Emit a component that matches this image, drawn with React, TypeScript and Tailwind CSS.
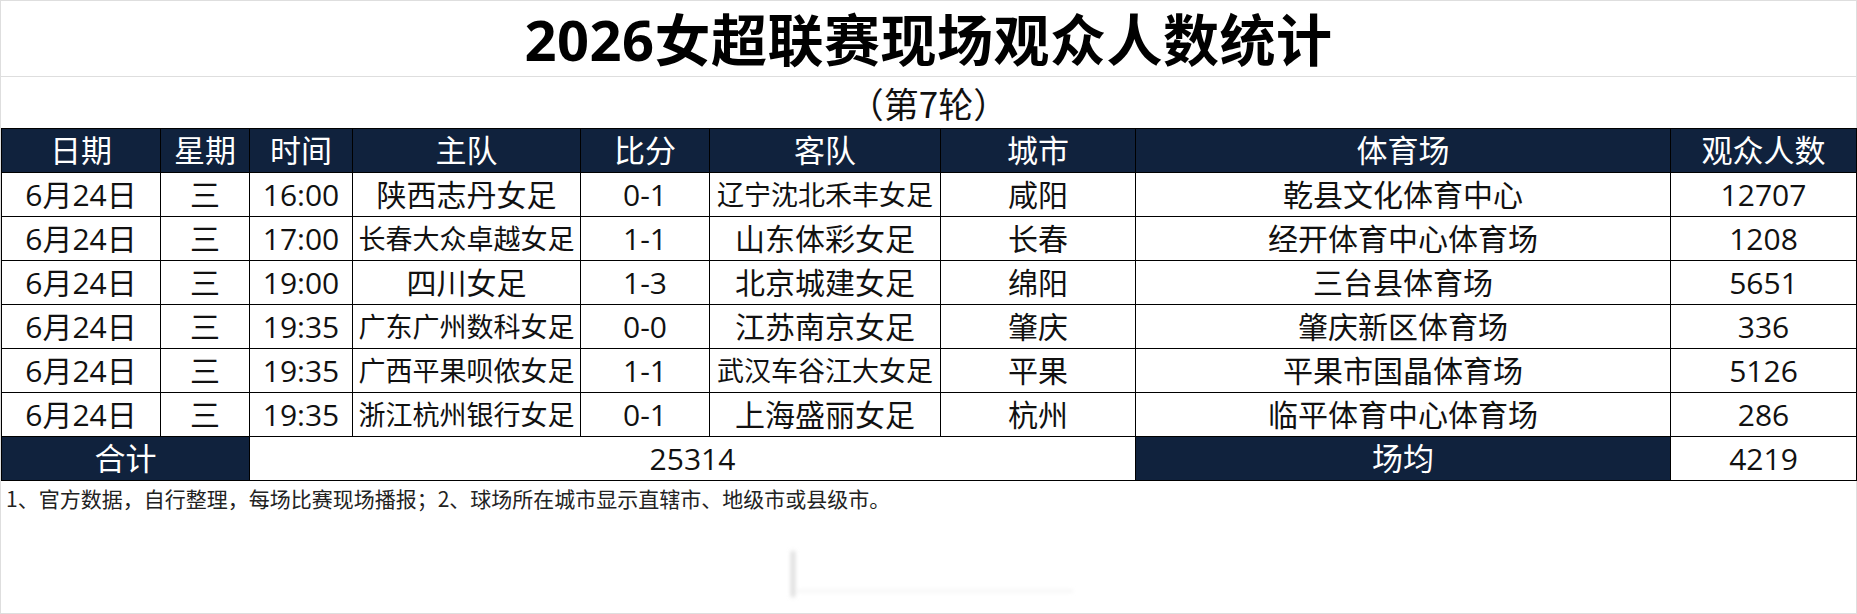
const font = '"Open Sans", "Noto Sans CJK SC", sans-serif'
const cjk = '"Noto Sans CJK SC", "Noto Sans", sans-serif'

type Match = {
  date: string
  day: string
  time: string
  home: string
  score: string
  away: string
  city: string
  venue: string
  crowd: string
}

const matches: Match[] = [
  { date: '6月24日', day: '三', time: '16:00', home: '陕西志丹女足', score: '0-1', away: '辽宁沈北禾丰女足', city: '咸阳', venue: '乾县文化体育中心', crowd: '12707' },
  { date: '6月24日', day: '三', time: '17:00', home: '长春大众卓越女足', score: '1-1', away: '山东体彩女足', city: '长春', venue: '经开体育中心体育场', crowd: '1208' },
  { date: '6月24日', day: '三', time: '19:00', home: '四川女足', score: '1-3', away: '北京城建女足', city: '绵阳', venue: '三台县体育场', crowd: '5651' },
  { date: '6月24日', day: '三', time: '19:35', home: '广东广州数科女足', score: '0-0', away: '江苏南京女足', city: '肇庆', venue: '肇庆新区体育场', crowd: '336' },
  { date: '6月24日', day: '三', time: '19:35', home: '广西平果呗侬女足', score: '1-1', away: '武汉车谷江大女足', city: '平果', venue: '平果市国晶体育场', crowd: '5126' },
  { date: '6月24日', day: '三', time: '19:35', home: '浙江杭州银行女足', score: '0-1', away: '上海盛丽女足', city: '杭州', venue: '临平体育中心体育场', crowd: '286' },
]

const headers = ['日期', '星期', '时间', '主队', '比分', '客队', '城市', '体育场', '观众人数']
const colW = ['w-[159px]', 'w-[89px]', 'w-[103px]', 'w-[228px]', 'w-[129px]', 'w-[231px]', 'w-[195px]', 'w-[535px]', 'w-[186px]']

// long team names get squeezed like a spreadsheet "shrink to fit"
const teamSize = (name: string) => (name.length > 6 ? 'text-[27px]' : 'text-[30px]')

const cell = 'border border-black p-0 align-middle whitespace-nowrap'

export default function App() {
  return (
    <div
      className="relative box-border w-[1857px] h-[614px] bg-white border border-[#dedede] flex flex-col text-[#111]"
      style={{ fontFamily: font }}
    >
      <div className="h-[76px] shrink-0 border-b border-[#dedede] flex items-center justify-center">
        <h1 className="text-[56px] font-bold leading-none tracking-[0.5px] text-black">2026女超联赛现场观众人数统计</h1>
      </div>
      <div className="h-[51px] shrink-0 flex items-center justify-center">
        <span className="text-[35px] leading-none" style={{ fontFamily: cjk }}>（第7轮）</span>
      </div>

      <table className="table-fixed border-collapse w-[1855px] shrink-0">
        <colgroup>
          {colW.map((w, i) => (
            <col key={i} className={w} />
          ))}
        </colgroup>
        <thead>
          <tr className="h-[44px] bg-[#10223d] text-white">
            {headers.map((h) => (
              <th key={h} className={`${cell} text-[31px] font-normal leading-none text-center`}>
                {h}
              </th>
            ))}
          </tr>
        </thead>
        <tbody>
          {matches.map((m, i) => (
            <tr key={i} className="h-[44px] text-[30px] leading-none text-center">
              <td className={cell}>{m.date}</td>
              <td className={cell}>{m.day}</td>
              <td className={cell}>{m.time}</td>
              <td className={`${cell} ${teamSize(m.home)}`}>{m.home}</td>
              <td className={cell}>{m.score}</td>
              <td className={`${cell} ${teamSize(m.away)}`}>{m.away}</td>
              <td className={cell}>{m.city}</td>
              <td className={cell}>{m.venue}</td>
              <td className={cell}>{m.crowd}</td>
            </tr>
          ))}
          <tr className="h-[44px] text-[30px] leading-none text-center">
            <td colSpan={2} className={`${cell} bg-[#10223d] text-white text-[31px]`}>合计</td>
            <td colSpan={5} className={cell}>25314</td>
            <td className={`${cell} bg-[#10223d] text-white text-[31px]`}>场均</td>
            <td className={cell}>4219</td>
          </tr>
        </tbody>
      </table>

      <p className="pl-[5px] pt-[3px] text-[21px] leading-[28px] text-[#222]" style={{ fontFamily: cjk }}>
        1、官方数据，自行整理，每场比赛现场播报；2、球场所在城市显示直辖市、地级市或县级市。
      </p>

      {/* faint watermark left on the screenshot */}
      <svg className="absolute left-[782px] top-[544px]" width="300" height="60" viewBox="0 0 300 60">
        <defs>
          <filter id="blur" x="-20%" y="-20%" width="140%" height="140%">
            <feGaussianBlur stdDeviation="2" />
          </filter>
        </defs>
        <g filter="url(#blur)" stroke="#d8d8d8" fill="none">
          <line x1="10" y1="6" x2="10" y2="52" strokeWidth="4" />
          <line x1="14" y1="46" x2="290" y2="46" strokeWidth="2" stroke="#f0f0f0" />
        </g>
      </svg>
    </div>
  )
}
